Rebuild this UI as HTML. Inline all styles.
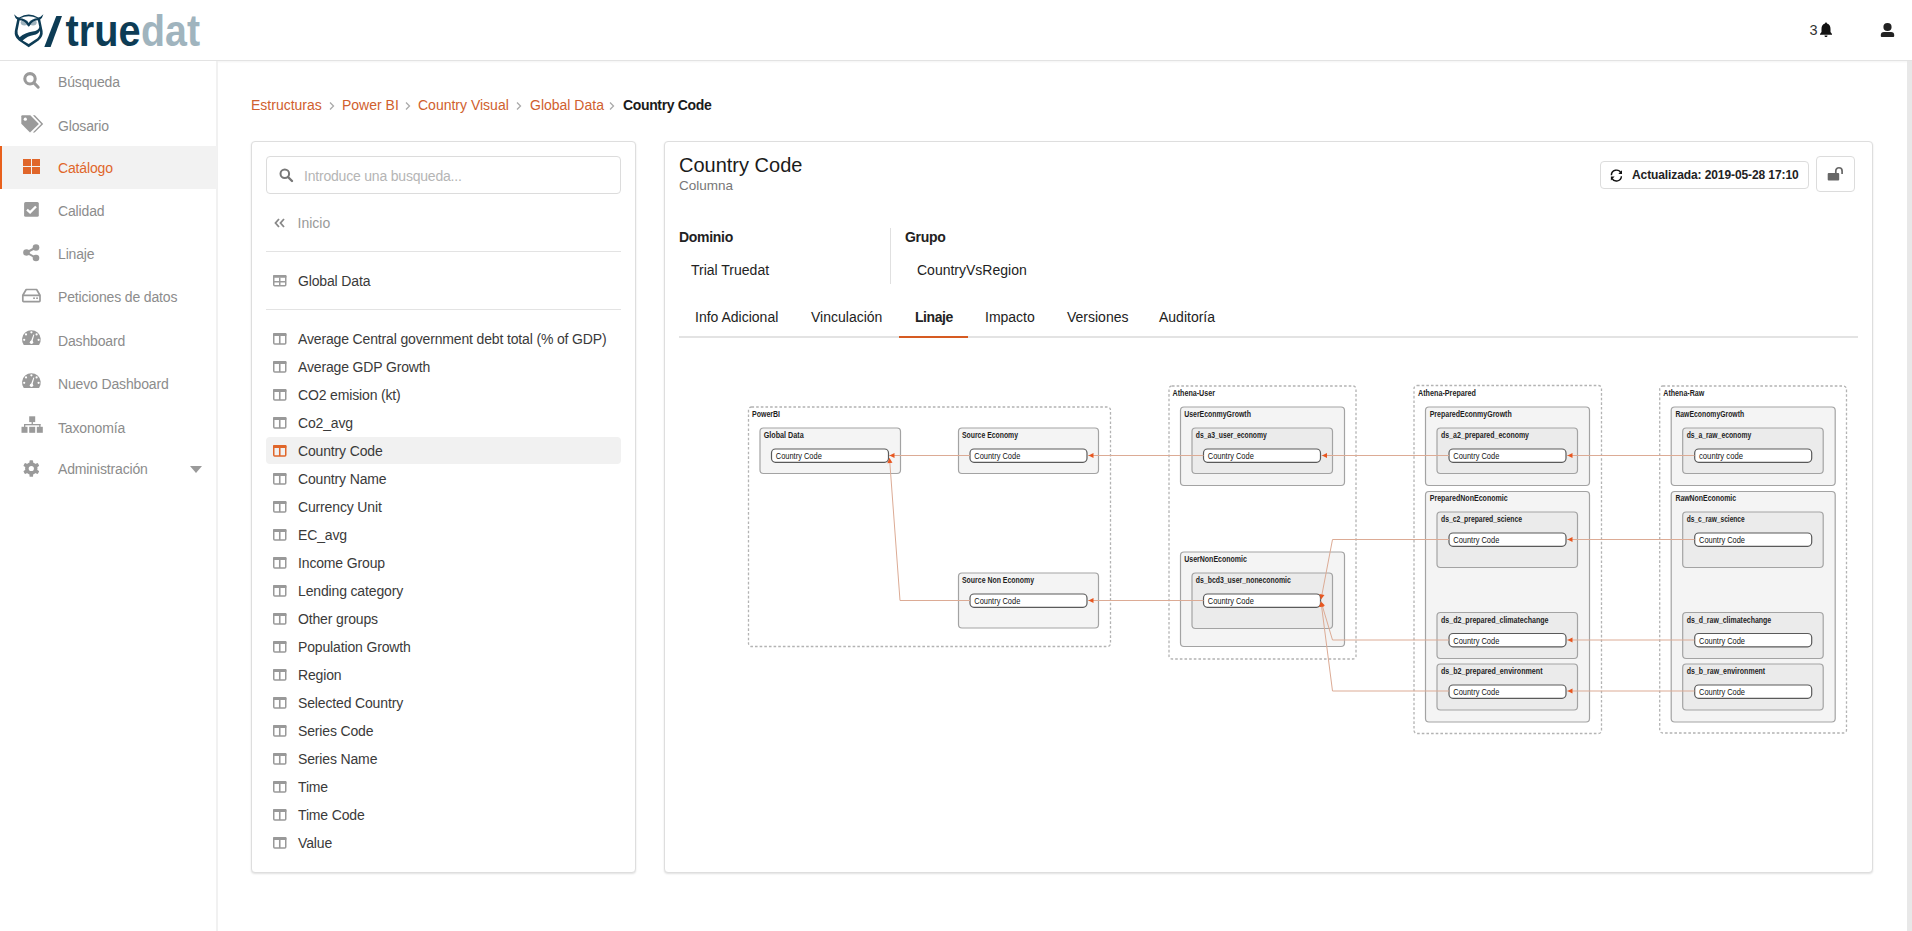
<!DOCTYPE html>
<html><head><meta charset="utf-8">
<style>
*{box-sizing:border-box;margin:0;padding:0}
html,body{width:1912px;height:931px;overflow:hidden;background:#fff;font-family:"Liberation Sans",sans-serif;color:#222}
#hdr{position:absolute;left:0;top:0;width:1912px;height:61px;background:#fff;border-bottom:1px solid #e3e3e3;box-shadow:0 1px 2px rgba(0,0,0,.05)}
#side{position:absolute;left:0;top:61px;width:218px;height:870px;background:#fff;border-right:2px solid #f1f1f1}
.nav{position:absolute;left:0;width:217px;height:43px}
.t{position:absolute;white-space:nowrap;line-height:1}
#sb{position:absolute;left:1907px;top:61px;width:5px;height:870px;background:#e8e8e8}
.card{position:absolute;background:#fff;border:1px solid #dedede;border-radius:4px;box-shadow:0 1px 2px rgba(0,0,0,.12)}
svg{position:absolute;overflow:visible}
</style></head><body>
<div id="hdr"></div>
<div id="side"></div>
<div id="sb"></div>

<svg style="left:0;top:0" width="220" height="60" viewBox="0 0 220 60">
<path fill="#0d3c55" d="M14,14.2 Q16.8,17.2 19.2,17.4 Q28.7,11.8 38.2,17.4 Q40.6,17.2 43.4,14.2 Q42.3,18.2 40.2,19.6 L42.6,31 Q43.4,36.6 38.6,40.6 L28.7,47.2 L18.8,40.6 Q14,36.6 14.8,31 L17.2,19.6 Q15.1,18.2 14,14.2 Z"/>
<path fill="#fff" d="M20,18.3 Q28.7,14 37.4,18.3 L39.3,27 Q38.6,30.8 32.6,31.6 Q25.2,32.6 19.6,37.2 Q17,34.6 17.5,31 Z"/>
<path fill="#fff" d="M22.6,40.6 Q27.6,36 33.8,35.1 Q38.4,34.3 40,30.6 Q40.6,35.2 37.4,38.2 L28.7,43.9 Z"/>
<g fill="#a0b4be"><ellipse cx="24.4" cy="22.6" rx="3.7" ry="2.9"/><ellipse cx="33" cy="22.6" rx="3.7" ry="2.9"/></g>
<path fill="none" stroke="#0d3c55" stroke-width="2.3" stroke-linejoin="round" d="M19,19.2 Q25.3,19.2 28.7,25.2 Q32.1,19.2 38.4,19.2"/>
<path fill="#0d3c55" d="M56.3,16 L62,16 L50.6,47 L44.3,47 Z"/>
<text x="65.5" y="46" font-family="Liberation Sans" font-weight="bold" font-size="45" fill="#0d3c55" textLength="75" lengthAdjust="spacingAndGlyphs">true</text>
<text x="141" y="46" font-family="Liberation Sans" font-weight="bold" font-size="45" fill="#a0b4be" textLength="59" lengthAdjust="spacingAndGlyphs">dat</text>
</svg>
<div class="t" style="left:1809.5px;top:23px;font-size:14.5px;color:#333;font-weight:normal;letter-spacing:0px;">3</div>
<svg style="left:1819px;top:21.8px" width="14" height="16" viewBox="0 0 14 16"><path fill="#111" d="M7 0.5 C7.6 0.5 8 1 8 1.6 C10.5 2.2 11.5 4.5 11.5 7 L11.5 10 L13 12 L13 12.8 L1 12.8 L1 12 L2.5 10 L2.5 7 C2.5 4.5 3.5 2.2 6 1.6 C6 1 6.4 0.5 7 0.5 Z M5.5 13.5 L8.5 13.5 C8.5 14.5 7.8 15 7 15 C6.2 15 5.5 14.5 5.5 13.5 Z"/></svg>
<svg style="left:1880px;top:23px" width="15" height="15" viewBox="0 0 15 15"><circle cx="7.5" cy="4" r="4.1" fill="#222"/><path fill="#222" d="M0.8 12 Q0.8 9 4 9 L11 9 Q14.2 9 14.2 12 L14.2 13 Q14.2 13.9 13.3 13.9 L1.7 13.9 Q0.8 13.9 0.8 13 Z"/></svg>
<div style="position:absolute;left:0;top:146px;width:217px;height:43px;background:#f2f2f2"></div>
<div style="position:absolute;left:0;top:146px;width:2px;height:43px;background:#e8601c"></div>
<div class="t" style="left:58px;top:75px;font-size:14px;color:#8c8c8c;font-weight:normal;letter-spacing:-0.15px;">Búsqueda</div>
<div class="t" style="left:58px;top:119px;font-size:14px;color:#8c8c8c;font-weight:normal;letter-spacing:-0.15px;">Glosario</div>
<div class="t" style="left:58px;top:161px;font-size:14px;color:#e0662a;font-weight:normal;letter-spacing:-0.15px;">Catálogo</div>
<div class="t" style="left:58px;top:204px;font-size:14px;color:#8c8c8c;font-weight:normal;letter-spacing:-0.15px;">Calidad</div>
<div class="t" style="left:58px;top:247px;font-size:14px;color:#8c8c8c;font-weight:normal;letter-spacing:-0.15px;">Linaje</div>
<div class="t" style="left:58px;top:290px;font-size:14px;color:#8c8c8c;font-weight:normal;letter-spacing:-0.15px;">Peticiones de datos</div>
<div class="t" style="left:58px;top:334px;font-size:14px;color:#8c8c8c;font-weight:normal;letter-spacing:-0.15px;">Dashboard</div>
<div class="t" style="left:58px;top:377px;font-size:14px;color:#8c8c8c;font-weight:normal;letter-spacing:-0.15px;">Nuevo Dashboard</div>
<div class="t" style="left:58px;top:421px;font-size:14px;color:#8c8c8c;font-weight:normal;letter-spacing:-0.15px;">Taxonomía</div>
<div class="t" style="left:58px;top:462px;font-size:14px;color:#8c8c8c;font-weight:normal;letter-spacing:-0.15px;">Administración</div>
<svg style="left:23px;top:72px" width="18" height="18" viewBox="0 0 18 18"><circle cx="7" cy="6.8" r="5.2" fill="none" stroke="#9a9a9a" stroke-width="3.1"/><path d="M11,10.9 L15.2,15.2" stroke="#9a9a9a" stroke-width="3" stroke-linecap="round"/></svg>
<svg style="left:21px;top:114.5px" width="23" height="18" viewBox="0 0 23 18"><path fill="#9a9a9a" d="M0.3,1.3 Q0.3,0.3 1.3,0.3 L9.3,0.3 L17.9,8.9 L9,17.5 L0.3,8.8 Z"/><circle cx="4.3" cy="4.2" r="1.6" fill="#fff"/><path fill="#9a9a9a" d="M11.9,0.3 L13.9,0.3 L22.2,8.9 L13.6,17.5 L11.8,17.5 L20.2,8.9 Z"/></svg>
<svg style="left:23px;top:159px" width="18" height="18" viewBox="0 0 18 18"><g fill="#e0662a"><rect x="0" y="0" width="8" height="7"/><rect x="9" y="0" width="8" height="7"/><rect x="0" y="8" width="8" height="7"/><rect x="9" y="8" width="8" height="7"/></g></svg>
<svg style="left:24px;top:202px" width="16" height="16" viewBox="0 0 16 16"><rect x="0.1" y="0.1" width="14.7" height="14.7" rx="1.5" fill="#9a9a9a"/><path d="M3,7.6 L6.1,10.4 L12,4.5" fill="none" stroke="#fff" stroke-width="2.3"/></svg>
<svg style="left:23px;top:244px" width="18" height="18" viewBox="0 0 18 18"><g fill="#9a9a9a"><circle cx="3.5" cy="8.5" r="3.3"/><circle cx="13" cy="3.5" r="3.3"/><circle cx="13" cy="14" r="3.3"/></g><path d="M3.5 8.5 L13 3.5 M3.5 8.5 L13 14" stroke="#9a9a9a" stroke-width="2"/></svg>
<svg style="left:21px;top:288px" width="21" height="15" viewBox="0 0 21 15"><path fill="none" stroke="#9a9a9a" stroke-width="1.7" stroke-linejoin="round" d="M1.8,7.3 L5.2,1.5 L15.6,1.5 L19,7.3 L19,12.8 Q19,13.6 18.2,13.6 L2.6,13.6 Q1.8,13.6 1.8,12.8 Z M1.8,7.3 L19,7.3"/><rect x="12.2" y="9.4" width="1.7" height="1.6" fill="#9a9a9a"/><rect x="15.2" y="9.4" width="1.7" height="1.6" fill="#9a9a9a"/></svg>
<svg style="left:21px;top:329px" width="21" height="17" viewBox="0 0 21 17"><path fill="#9a9a9a" d="M2.77,15.9 A9.35,9.35 0 1 1 18.03,15.9 Z"/><g fill="#fff"><circle cx="3.2" cy="10.8" r="1.1"/><circle cx="5" cy="5.4" r="1.1"/><circle cx="10.4" cy="3.3" r="1.1"/><circle cx="15.6" cy="5.4" r="1.1"/><circle cx="17.6" cy="10.8" r="1.1"/><path d="M9.7,13 L12.4,5.5 L13.3,5.8 L11.2,13.5 Z"/><circle cx="10.5" cy="13.3" r="1.7"/></g></svg>
<svg style="left:21px;top:372px" width="21" height="17" viewBox="0 0 21 17"><path fill="#9a9a9a" d="M2.77,15.9 A9.35,9.35 0 1 1 18.03,15.9 Z"/><g fill="#fff"><circle cx="3.2" cy="10.8" r="1.1"/><circle cx="5" cy="5.4" r="1.1"/><circle cx="10.4" cy="3.3" r="1.1"/><circle cx="15.6" cy="5.4" r="1.1"/><circle cx="17.6" cy="10.8" r="1.1"/><path d="M9.7,13 L12.4,5.5 L13.3,5.8 L11.2,13.5 Z"/><circle cx="10.5" cy="13.3" r="1.7"/></g></svg>
<svg style="left:21px;top:416px" width="23" height="18" viewBox="0 0 23 18"><g fill="#9a9a9a"><rect x="8.2" y="0.3" width="6" height="5.8"/><rect x="10.6" y="5.5" width="1.3" height="3"/><rect x="3" y="8" width="16.5" height="1.3"/><rect x="3" y="8" width="1.3" height="3"/><rect x="18.2" y="8" width="1.3" height="3"/><rect x="0.5" y="10.8" width="6" height="6"/><rect x="8.2" y="10.8" width="6" height="6"/><rect x="15.8" y="10.8" width="6" height="6"/></g></svg>
<svg style="left:22px;top:459px" width="19" height="19" viewBox="0 0 19 19"><g fill="#9a9a9a"><circle cx="9.3" cy="9.5" r="6.2"/><rect x="7.5" y="1.2" width="3.6" height="4" rx="0.9" transform="rotate(0 9.3 9.5)"/><rect x="7.5" y="1.2" width="3.6" height="4" rx="0.9" transform="rotate(60 9.3 9.5)"/><rect x="7.5" y="1.2" width="3.6" height="4" rx="0.9" transform="rotate(120 9.3 9.5)"/><rect x="7.5" y="1.2" width="3.6" height="4" rx="0.9" transform="rotate(180 9.3 9.5)"/><rect x="7.5" y="1.2" width="3.6" height="4" rx="0.9" transform="rotate(240 9.3 9.5)"/><rect x="7.5" y="1.2" width="3.6" height="4" rx="0.9" transform="rotate(300 9.3 9.5)"/></g><circle cx="9.3" cy="9.5" r="2.6" fill="#fff"/></svg>
<svg style="left:190px;top:465.5px" width="12" height="7" viewBox="0 0 12 7"><path d="M0 0 L12 0 L6 7 Z" fill="#9a9a9a"/></svg>
<div class="t" style="left:251px;top:98px;font-size:14px;color:#d0602e;font-weight:normal;letter-spacing:0px;">Estructuras</div>
<div class="t" style="left:342px;top:98px;font-size:14px;color:#d0602e;font-weight:normal;letter-spacing:0px;">Power BI</div>
<div class="t" style="left:418px;top:98px;font-size:14px;color:#d0602e;font-weight:normal;letter-spacing:0px;">Country Visual</div>
<div class="t" style="left:530px;top:98px;font-size:14px;color:#d0602e;font-weight:normal;letter-spacing:0px;">Global Data</div>
<svg style="left:329px;top:102px" width="6" height="8" viewBox="0 0 6 8"><path d="M1 0.5 L4.5 4 L1 7.5" fill="none" stroke="#aaa" stroke-width="1.3"/></svg>
<svg style="left:405px;top:102px" width="6" height="8" viewBox="0 0 6 8"><path d="M1 0.5 L4.5 4 L1 7.5" fill="none" stroke="#aaa" stroke-width="1.3"/></svg>
<svg style="left:516px;top:102px" width="6" height="8" viewBox="0 0 6 8"><path d="M1 0.5 L4.5 4 L1 7.5" fill="none" stroke="#aaa" stroke-width="1.3"/></svg>
<svg style="left:609px;top:102px" width="6" height="8" viewBox="0 0 6 8"><path d="M1 0.5 L4.5 4 L1 7.5" fill="none" stroke="#aaa" stroke-width="1.3"/></svg>
<div class="t" style="left:623px;top:98px;font-size:14px;color:#1b1b1b;font-weight:bold;letter-spacing:-0.35px;">Country Code</div>
<div class="card" style="left:251px;top:141px;width:385px;height:732px"></div>
<div style="position:absolute;left:266px;top:156px;width:355px;height:38px;border:1px solid #dcdcdc;border-radius:4px;background:#fff"></div>
<svg style="left:279px;top:168px" width="14" height="14" viewBox="0 0 14 14"><circle cx="5.8" cy="5.8" r="4.3" fill="none" stroke="#777" stroke-width="2"/><path d="M9 9 L13 13" stroke="#777" stroke-width="2.4" stroke-linecap="round"/></svg>
<div class="t" style="left:304px;top:169px;font-size:14px;color:#b5b5b5;font-weight:normal;letter-spacing:-0.2px;">Introduce una busqueda...</div>
<svg style="left:274px;top:218px" width="12" height="10" viewBox="0 0 12 10"><path d="M5 1 L1.5 5 L5 9 M10 1 L6.5 5 L10 9" fill="none" stroke="#888" stroke-width="1.8"/></svg>
<div class="t" style="left:297.5px;top:215.5px;font-size:14px;color:#999;font-weight:normal;letter-spacing:0px;">Inicio</div>
<div style="position:absolute;left:266px;top:251px;width:355px;height:1px;background:#e3e3e3"></div>
<svg style="left:273px;top:275px" width="14" height="12" viewBox="0 0 14 12"><rect x="0.75" y="0.75" width="12" height="10.1" rx="1" fill="none" stroke="#9b9b9b" stroke-width="1.5"/><rect x="0" y="0" width="13.5" height="2.8" rx="1" fill="#9b9b9b"/><path d="M0.75 6.8 L12.75 6.8 M6.75 2.5 L6.75 10.8" stroke="#9b9b9b" stroke-width="1.5"/></svg>
<div class="t" style="left:298px;top:274px;font-size:14px;color:#3a3a3a;font-weight:normal;letter-spacing:-0.15px;">Global Data</div>
<div style="position:absolute;left:266px;top:309px;width:355px;height:1px;background:#e3e3e3"></div>
<svg style="left:273px;top:333px" width="14" height="12" viewBox="0 0 14 12"><rect x="0.75" y="0.75" width="12" height="10.3" rx="1" fill="none" stroke="#999" stroke-width="1.5"/><rect x="0" y="0" width="13.5" height="3" rx="1" fill="#999"/><path d="M6.75 2.5 L6.75 11" stroke="#999" stroke-width="1.6"/></svg>
<div class="t" style="left:298px;top:332px;font-size:14px;color:#3a3a3a;font-weight:normal;letter-spacing:-0.15px;">Average Central government debt total (% of GDP)</div>
<svg style="left:273px;top:361px" width="14" height="12" viewBox="0 0 14 12"><rect x="0.75" y="0.75" width="12" height="10.3" rx="1" fill="none" stroke="#999" stroke-width="1.5"/><rect x="0" y="0" width="13.5" height="3" rx="1" fill="#999"/><path d="M6.75 2.5 L6.75 11" stroke="#999" stroke-width="1.6"/></svg>
<div class="t" style="left:298px;top:360px;font-size:14px;color:#3a3a3a;font-weight:normal;letter-spacing:-0.15px;">Average GDP Growth</div>
<svg style="left:273px;top:389px" width="14" height="12" viewBox="0 0 14 12"><rect x="0.75" y="0.75" width="12" height="10.3" rx="1" fill="none" stroke="#999" stroke-width="1.5"/><rect x="0" y="0" width="13.5" height="3" rx="1" fill="#999"/><path d="M6.75 2.5 L6.75 11" stroke="#999" stroke-width="1.6"/></svg>
<div class="t" style="left:298px;top:388px;font-size:14px;color:#3a3a3a;font-weight:normal;letter-spacing:-0.15px;">CO2 emision (kt)</div>
<svg style="left:273px;top:417px" width="14" height="12" viewBox="0 0 14 12"><rect x="0.75" y="0.75" width="12" height="10.3" rx="1" fill="none" stroke="#999" stroke-width="1.5"/><rect x="0" y="0" width="13.5" height="3" rx="1" fill="#999"/><path d="M6.75 2.5 L6.75 11" stroke="#999" stroke-width="1.6"/></svg>
<div class="t" style="left:298px;top:416px;font-size:14px;color:#3a3a3a;font-weight:normal;letter-spacing:-0.15px;">Co2_avg</div>
<div style="position:absolute;left:266px;top:437px;width:355px;height:27px;border-radius:4px;background:#f1f1f1"></div>
<svg style="left:273px;top:445px" width="14" height="12" viewBox="0 0 14 12"><rect x="0.75" y="0.75" width="12" height="10.3" rx="1" fill="none" stroke="#e0662a" stroke-width="1.5"/><rect x="0" y="0" width="13.5" height="3" rx="1" fill="#e0662a"/><path d="M6.75 2.5 L6.75 11" stroke="#e0662a" stroke-width="1.6"/></svg>
<div class="t" style="left:298px;top:444px;font-size:14px;color:#3a3a3a;font-weight:normal;letter-spacing:-0.15px;">Country Code</div>
<svg style="left:273px;top:473px" width="14" height="12" viewBox="0 0 14 12"><rect x="0.75" y="0.75" width="12" height="10.3" rx="1" fill="none" stroke="#999" stroke-width="1.5"/><rect x="0" y="0" width="13.5" height="3" rx="1" fill="#999"/><path d="M6.75 2.5 L6.75 11" stroke="#999" stroke-width="1.6"/></svg>
<div class="t" style="left:298px;top:472px;font-size:14px;color:#3a3a3a;font-weight:normal;letter-spacing:-0.15px;">Country Name</div>
<svg style="left:273px;top:501px" width="14" height="12" viewBox="0 0 14 12"><rect x="0.75" y="0.75" width="12" height="10.3" rx="1" fill="none" stroke="#999" stroke-width="1.5"/><rect x="0" y="0" width="13.5" height="3" rx="1" fill="#999"/><path d="M6.75 2.5 L6.75 11" stroke="#999" stroke-width="1.6"/></svg>
<div class="t" style="left:298px;top:500px;font-size:14px;color:#3a3a3a;font-weight:normal;letter-spacing:-0.15px;">Currency Unit</div>
<svg style="left:273px;top:529px" width="14" height="12" viewBox="0 0 14 12"><rect x="0.75" y="0.75" width="12" height="10.3" rx="1" fill="none" stroke="#999" stroke-width="1.5"/><rect x="0" y="0" width="13.5" height="3" rx="1" fill="#999"/><path d="M6.75 2.5 L6.75 11" stroke="#999" stroke-width="1.6"/></svg>
<div class="t" style="left:298px;top:528px;font-size:14px;color:#3a3a3a;font-weight:normal;letter-spacing:-0.15px;">EC_avg</div>
<svg style="left:273px;top:557px" width="14" height="12" viewBox="0 0 14 12"><rect x="0.75" y="0.75" width="12" height="10.3" rx="1" fill="none" stroke="#999" stroke-width="1.5"/><rect x="0" y="0" width="13.5" height="3" rx="1" fill="#999"/><path d="M6.75 2.5 L6.75 11" stroke="#999" stroke-width="1.6"/></svg>
<div class="t" style="left:298px;top:556px;font-size:14px;color:#3a3a3a;font-weight:normal;letter-spacing:-0.15px;">Income Group</div>
<svg style="left:273px;top:585px" width="14" height="12" viewBox="0 0 14 12"><rect x="0.75" y="0.75" width="12" height="10.3" rx="1" fill="none" stroke="#999" stroke-width="1.5"/><rect x="0" y="0" width="13.5" height="3" rx="1" fill="#999"/><path d="M6.75 2.5 L6.75 11" stroke="#999" stroke-width="1.6"/></svg>
<div class="t" style="left:298px;top:584px;font-size:14px;color:#3a3a3a;font-weight:normal;letter-spacing:-0.15px;">Lending category</div>
<svg style="left:273px;top:613px" width="14" height="12" viewBox="0 0 14 12"><rect x="0.75" y="0.75" width="12" height="10.3" rx="1" fill="none" stroke="#999" stroke-width="1.5"/><rect x="0" y="0" width="13.5" height="3" rx="1" fill="#999"/><path d="M6.75 2.5 L6.75 11" stroke="#999" stroke-width="1.6"/></svg>
<div class="t" style="left:298px;top:612px;font-size:14px;color:#3a3a3a;font-weight:normal;letter-spacing:-0.15px;">Other groups</div>
<svg style="left:273px;top:641px" width="14" height="12" viewBox="0 0 14 12"><rect x="0.75" y="0.75" width="12" height="10.3" rx="1" fill="none" stroke="#999" stroke-width="1.5"/><rect x="0" y="0" width="13.5" height="3" rx="1" fill="#999"/><path d="M6.75 2.5 L6.75 11" stroke="#999" stroke-width="1.6"/></svg>
<div class="t" style="left:298px;top:640px;font-size:14px;color:#3a3a3a;font-weight:normal;letter-spacing:-0.15px;">Population Growth</div>
<svg style="left:273px;top:669px" width="14" height="12" viewBox="0 0 14 12"><rect x="0.75" y="0.75" width="12" height="10.3" rx="1" fill="none" stroke="#999" stroke-width="1.5"/><rect x="0" y="0" width="13.5" height="3" rx="1" fill="#999"/><path d="M6.75 2.5 L6.75 11" stroke="#999" stroke-width="1.6"/></svg>
<div class="t" style="left:298px;top:668px;font-size:14px;color:#3a3a3a;font-weight:normal;letter-spacing:-0.15px;">Region</div>
<svg style="left:273px;top:697px" width="14" height="12" viewBox="0 0 14 12"><rect x="0.75" y="0.75" width="12" height="10.3" rx="1" fill="none" stroke="#999" stroke-width="1.5"/><rect x="0" y="0" width="13.5" height="3" rx="1" fill="#999"/><path d="M6.75 2.5 L6.75 11" stroke="#999" stroke-width="1.6"/></svg>
<div class="t" style="left:298px;top:696px;font-size:14px;color:#3a3a3a;font-weight:normal;letter-spacing:-0.15px;">Selected Country</div>
<svg style="left:273px;top:725px" width="14" height="12" viewBox="0 0 14 12"><rect x="0.75" y="0.75" width="12" height="10.3" rx="1" fill="none" stroke="#999" stroke-width="1.5"/><rect x="0" y="0" width="13.5" height="3" rx="1" fill="#999"/><path d="M6.75 2.5 L6.75 11" stroke="#999" stroke-width="1.6"/></svg>
<div class="t" style="left:298px;top:724px;font-size:14px;color:#3a3a3a;font-weight:normal;letter-spacing:-0.15px;">Series Code</div>
<svg style="left:273px;top:753px" width="14" height="12" viewBox="0 0 14 12"><rect x="0.75" y="0.75" width="12" height="10.3" rx="1" fill="none" stroke="#999" stroke-width="1.5"/><rect x="0" y="0" width="13.5" height="3" rx="1" fill="#999"/><path d="M6.75 2.5 L6.75 11" stroke="#999" stroke-width="1.6"/></svg>
<div class="t" style="left:298px;top:752px;font-size:14px;color:#3a3a3a;font-weight:normal;letter-spacing:-0.15px;">Series Name</div>
<svg style="left:273px;top:781px" width="14" height="12" viewBox="0 0 14 12"><rect x="0.75" y="0.75" width="12" height="10.3" rx="1" fill="none" stroke="#999" stroke-width="1.5"/><rect x="0" y="0" width="13.5" height="3" rx="1" fill="#999"/><path d="M6.75 2.5 L6.75 11" stroke="#999" stroke-width="1.6"/></svg>
<div class="t" style="left:298px;top:780px;font-size:14px;color:#3a3a3a;font-weight:normal;letter-spacing:-0.15px;">Time</div>
<svg style="left:273px;top:809px" width="14" height="12" viewBox="0 0 14 12"><rect x="0.75" y="0.75" width="12" height="10.3" rx="1" fill="none" stroke="#999" stroke-width="1.5"/><rect x="0" y="0" width="13.5" height="3" rx="1" fill="#999"/><path d="M6.75 2.5 L6.75 11" stroke="#999" stroke-width="1.6"/></svg>
<div class="t" style="left:298px;top:808px;font-size:14px;color:#3a3a3a;font-weight:normal;letter-spacing:-0.15px;">Time Code</div>
<svg style="left:273px;top:837px" width="14" height="12" viewBox="0 0 14 12"><rect x="0.75" y="0.75" width="12" height="10.3" rx="1" fill="none" stroke="#999" stroke-width="1.5"/><rect x="0" y="0" width="13.5" height="3" rx="1" fill="#999"/><path d="M6.75 2.5 L6.75 11" stroke="#999" stroke-width="1.6"/></svg>
<div class="t" style="left:298px;top:836px;font-size:14px;color:#3a3a3a;font-weight:normal;letter-spacing:-0.15px;">Value</div>
<div class="card" style="left:664px;top:141px;width:1209px;height:732px"></div>
<div class="t" style="left:679px;top:155px;font-size:20px;color:#1b1b1b;font-weight:normal;letter-spacing:0px;">Country Code</div>
<div class="t" style="left:679px;top:179px;font-size:13.5px;color:#777;font-weight:normal;letter-spacing:0px;">Columna</div>
<div style="position:absolute;left:1600px;top:161px;width:209px;height:28px;border:1px solid #dcdcdc;border-radius:4px;background:#fff"></div>
<svg style="left:1610px;top:168.7px" width="13" height="13" viewBox="0 0 13 13"><path d="M1.4,6.2 A5,5 0 0 1 10.9,4" fill="none" stroke="#111" stroke-width="1.45"/><path d="M12,1.2 L12,5 L8.3,5 Z" fill="#111"/><path d="M11.4,7.3 A5,5 0 0 1 2.1,9.6" fill="none" stroke="#111" stroke-width="1.45"/><path d="M0.9,7.6 L0.9,11.4 L4.6,7.6 Z" fill="#111"/></svg>
<div class="t" style="left:1632px;top:169px;font-size:12px;color:#222;font-weight:bold;letter-spacing:-0.1px;">Actualizada: 2019-05-28 17:10</div>
<div style="position:absolute;left:1816px;top:156px;width:39px;height:36px;border:1px solid #dcdcdc;border-radius:4px;background:#fff"></div>
<svg style="left:1827px;top:167px" width="17" height="15" viewBox="0 0 17 15"><rect x="0.7" y="6" width="11.5" height="7.6" rx="1" fill="#676767"/><path d="M8.8,6.2 L8.8,3.9 A3.15,3.15 0 0 1 15.1,3.9 L15.1,6.9" fill="none" stroke="#676767" stroke-width="1.7"/></svg>
<div class="t" style="left:679px;top:230px;font-size:14px;color:#222;font-weight:bold;letter-spacing:-0.3px;">Dominio</div>
<div class="t" style="left:905px;top:230px;font-size:14px;color:#222;font-weight:bold;letter-spacing:-0.3px;">Grupo</div>
<div class="t" style="left:691px;top:263px;font-size:14px;color:#222;font-weight:normal;letter-spacing:0px;">Trial Truedat</div>
<div class="t" style="left:917px;top:263px;font-size:14px;color:#222;font-weight:normal;letter-spacing:0px;">CountryVsRegion</div>
<div style="position:absolute;left:890px;top:228px;width:1px;height:56px;background:#e0e0e0"></div>
<div class="t" style="left:695px;top:310px;font-size:14px;color:#222;font-weight:normal;letter-spacing:0px;">Info Adicional</div>
<div class="t" style="left:811px;top:310px;font-size:14px;color:#222;font-weight:normal;letter-spacing:0px;">Vinculación</div>
<div class="t" style="left:915px;top:310px;font-size:14px;color:#222;font-weight:bold;letter-spacing:-0.45px;">Linaje</div>
<div class="t" style="left:985px;top:310px;font-size:14px;color:#222;font-weight:normal;letter-spacing:0px;">Impacto</div>
<div class="t" style="left:1067px;top:310px;font-size:14px;color:#222;font-weight:normal;letter-spacing:0px;">Versiones</div>
<div class="t" style="left:1159px;top:310px;font-size:14px;color:#222;font-weight:normal;letter-spacing:0px;">Auditoría</div>
<div style="position:absolute;left:679px;top:336px;width:1179px;height:2px;background:#e3e3e3"></div>
<div style="position:absolute;left:899px;top:336px;width:69px;height:2px;background:#d65b22"></div>
<svg style="left:0;top:0" width="1912" height="931" viewBox="0 0 1912 931">
<rect x="748.5" y="407" width="362.0" height="239.5" rx="3" fill="none" stroke="#b3b3b3" stroke-width="1.3" stroke-dasharray="2.6 2.05"/>
<text x="752" y="417" font-family="Liberation Sans" font-size="9" font-weight="bold" fill="#1e1e1e" textLength="28" lengthAdjust="spacingAndGlyphs">PowerBI</text>
<rect x="1169" y="386" width="187" height="273" rx="3" fill="none" stroke="#b3b3b3" stroke-width="1.3" stroke-dasharray="2.6 2.05"/>
<text x="1172.5" y="396" font-family="Liberation Sans" font-size="9" font-weight="bold" fill="#1e1e1e" textLength="42.5" lengthAdjust="spacingAndGlyphs">Athena-User</text>
<rect x="1414" y="385.5" width="187.5" height="348.0" rx="3" fill="none" stroke="#b3b3b3" stroke-width="1.3" stroke-dasharray="2.6 2.05"/>
<text x="1418" y="396" font-family="Liberation Sans" font-size="9" font-weight="bold" fill="#1e1e1e" textLength="58" lengthAdjust="spacingAndGlyphs">Athena-Prepared</text>
<rect x="1659.7" y="386" width="186.79999999999995" height="347" rx="3" fill="none" stroke="#b3b3b3" stroke-width="1.3" stroke-dasharray="2.6 2.05"/>
<text x="1663.3" y="396" font-family="Liberation Sans" font-size="9" font-weight="bold" fill="#1e1e1e" textLength="41" lengthAdjust="spacingAndGlyphs">Athena-Raw</text>
<rect x="760" y="428" width="140.5" height="45.5" rx="3.5" fill="#f4f4f4" stroke="#a3a3a3" stroke-width="1.2"/>
<text x="763.7" y="437.7" font-family="Liberation Sans" font-size="9" font-weight="bold" fill="#1e1e1e" textLength="40" lengthAdjust="spacingAndGlyphs">Global Data</text>
<rect x="771.5" y="449" width="117" height="13.3" rx="4" fill="#fff" stroke="#5a5a5a" stroke-width="1.2"/>
<text x="775.8" y="459" font-family="Liberation Sans" font-size="8.8" fill="#111" textLength="46" lengthAdjust="spacingAndGlyphs">Country Code</text>
<rect x="958.5" y="428" width="140.0" height="45.5" rx="3.5" fill="#f4f4f4" stroke="#a3a3a3" stroke-width="1.2"/>
<text x="962" y="437.7" font-family="Liberation Sans" font-size="9" font-weight="bold" fill="#1e1e1e" textLength="56" lengthAdjust="spacingAndGlyphs">Source Economy</text>
<rect x="970" y="449" width="117" height="13.3" rx="4" fill="#fff" stroke="#5a5a5a" stroke-width="1.2"/>
<text x="974.3" y="459" font-family="Liberation Sans" font-size="8.8" fill="#111" textLength="46" lengthAdjust="spacingAndGlyphs">Country Code</text>
<rect x="958.5" y="573" width="140.0" height="55" rx="3.5" fill="#f4f4f4" stroke="#a3a3a3" stroke-width="1.2"/>
<text x="962" y="582.7" font-family="Liberation Sans" font-size="9" font-weight="bold" fill="#1e1e1e" textLength="72" lengthAdjust="spacingAndGlyphs">Source Non Economy</text>
<rect x="970" y="594" width="117" height="13.3" rx="4" fill="#fff" stroke="#5a5a5a" stroke-width="1.2"/>
<text x="974.3" y="604" font-family="Liberation Sans" font-size="8.8" fill="#111" textLength="46" lengthAdjust="spacingAndGlyphs">Country Code</text>
<rect x="1180.5" y="407" width="164.0" height="78.5" rx="3.5" fill="#f4f4f4" stroke="#a3a3a3" stroke-width="1.2"/>
<text x="1184.2" y="416.8" font-family="Liberation Sans" font-size="9" font-weight="bold" fill="#1e1e1e" textLength="66.7" lengthAdjust="spacingAndGlyphs">UserEconmyGrowth</text>
<rect x="1192" y="428" width="140.5" height="45.5" rx="3.5" fill="#ebebeb" stroke="#a3a3a3" stroke-width="1.2"/>
<text x="1195.8" y="437.7" font-family="Liberation Sans" font-size="9" font-weight="bold" fill="#1e1e1e" textLength="71" lengthAdjust="spacingAndGlyphs">ds_a3_user_economy</text>
<rect x="1203.5" y="449" width="117" height="13.3" rx="4" fill="#fff" stroke="#5a5a5a" stroke-width="1.2"/>
<text x="1207.8" y="459" font-family="Liberation Sans" font-size="8.8" fill="#111" textLength="46" lengthAdjust="spacingAndGlyphs">Country Code</text>
<rect x="1180.5" y="552" width="164.0" height="94.5" rx="3.5" fill="#f4f4f4" stroke="#a3a3a3" stroke-width="1.2"/>
<text x="1184.2" y="561.8" font-family="Liberation Sans" font-size="9" font-weight="bold" fill="#1e1e1e" textLength="62.7" lengthAdjust="spacingAndGlyphs">UserNonEconomic</text>
<rect x="1192" y="573" width="140.5" height="55.5" rx="3.5" fill="#ebebeb" stroke="#a3a3a3" stroke-width="1.2"/>
<text x="1195.8" y="582.7" font-family="Liberation Sans" font-size="9" font-weight="bold" fill="#1e1e1e" textLength="95" lengthAdjust="spacingAndGlyphs">ds_bcd3_user_noneconomic</text>
<rect x="1203.5" y="594" width="117" height="13.3" rx="4" fill="#fff" stroke="#5a5a5a" stroke-width="1.2"/>
<text x="1207.8" y="604" font-family="Liberation Sans" font-size="8.8" fill="#111" textLength="46" lengthAdjust="spacingAndGlyphs">Country Code</text>
<rect x="1425.5" y="407" width="164.0" height="78.5" rx="3.5" fill="#f4f4f4" stroke="#a3a3a3" stroke-width="1.2"/>
<text x="1429.7" y="416.8" font-family="Liberation Sans" font-size="9" font-weight="bold" fill="#1e1e1e" textLength="82" lengthAdjust="spacingAndGlyphs">PreparedEconmyGrowth</text>
<rect x="1437.0" y="428" width="140.5" height="45.5" rx="3.5" fill="#ebebeb" stroke="#a3a3a3" stroke-width="1.2"/>
<text x="1441.0" y="437.7" font-family="Liberation Sans" font-size="9" font-weight="bold" fill="#1e1e1e" textLength="88" lengthAdjust="spacingAndGlyphs">ds_a2_prepared_economy</text>
<rect x="1449.0" y="449" width="117" height="13.3" rx="4" fill="#fff" stroke="#5a5a5a" stroke-width="1.2"/>
<text x="1453.3" y="459" font-family="Liberation Sans" font-size="8.8" fill="#111" textLength="46" lengthAdjust="spacingAndGlyphs">Country Code</text>
<rect x="1425.5" y="491.5" width="164.0" height="230.5" rx="3.5" fill="#f4f4f4" stroke="#a3a3a3" stroke-width="1.2"/>
<text x="1429.7" y="501.3" font-family="Liberation Sans" font-size="9" font-weight="bold" fill="#1e1e1e" textLength="78" lengthAdjust="spacingAndGlyphs">PreparedNonEconomic</text>
<rect x="1437.0" y="512" width="140.5" height="55.5" rx="3.5" fill="#ebebeb" stroke="#a3a3a3" stroke-width="1.2"/>
<text x="1441.0" y="521.7" font-family="Liberation Sans" font-size="9" font-weight="bold" fill="#1e1e1e" textLength="81" lengthAdjust="spacingAndGlyphs">ds_c2_prepared_science</text>
<rect x="1449.0" y="533" width="117" height="13.3" rx="4" fill="#fff" stroke="#5a5a5a" stroke-width="1.2"/>
<text x="1453.3" y="543" font-family="Liberation Sans" font-size="8.8" fill="#111" textLength="46" lengthAdjust="spacingAndGlyphs">Country Code</text>
<rect x="1437.0" y="612.5" width="140.5" height="46.0" rx="3.5" fill="#ebebeb" stroke="#a3a3a3" stroke-width="1.2"/>
<text x="1441.0" y="622.5" font-family="Liberation Sans" font-size="9" font-weight="bold" fill="#1e1e1e" textLength="107.5" lengthAdjust="spacingAndGlyphs">ds_d2_prepared_climatechange</text>
<rect x="1449.0" y="633.5" width="117" height="13.3" rx="4" fill="#fff" stroke="#5a5a5a" stroke-width="1.2"/>
<text x="1453.3" y="643.5" font-family="Liberation Sans" font-size="8.8" fill="#111" textLength="46" lengthAdjust="spacingAndGlyphs">Country Code</text>
<rect x="1437.0" y="664" width="140.5" height="46" rx="3.5" fill="#ebebeb" stroke="#a3a3a3" stroke-width="1.2"/>
<text x="1441.0" y="674" font-family="Liberation Sans" font-size="9" font-weight="bold" fill="#1e1e1e" textLength="101.5" lengthAdjust="spacingAndGlyphs">ds_b2_prepared_environment</text>
<rect x="1449.0" y="685" width="117" height="13.3" rx="4" fill="#fff" stroke="#5a5a5a" stroke-width="1.2"/>
<text x="1453.3" y="695" font-family="Liberation Sans" font-size="8.8" fill="#111" textLength="46" lengthAdjust="spacingAndGlyphs">Country Code</text>
<rect x="1671.2" y="407" width="164.0" height="78.5" rx="3.5" fill="#f4f4f4" stroke="#a3a3a3" stroke-width="1.2"/>
<text x="1675.4" y="416.8" font-family="Liberation Sans" font-size="9" font-weight="bold" fill="#1e1e1e" textLength="68.7" lengthAdjust="spacingAndGlyphs">RawEconomyGrowth</text>
<rect x="1682.7" y="428" width="140.5" height="45.5" rx="3.5" fill="#ebebeb" stroke="#a3a3a3" stroke-width="1.2"/>
<text x="1686.7" y="437.7" font-family="Liberation Sans" font-size="9" font-weight="bold" fill="#1e1e1e" textLength="64.5" lengthAdjust="spacingAndGlyphs">ds_a_raw_economy</text>
<rect x="1694.7" y="449" width="117" height="13.3" rx="4" fill="#fff" stroke="#5a5a5a" stroke-width="1.2"/>
<text x="1699.0" y="459" font-family="Liberation Sans" font-size="8.8" fill="#111" textLength="44" lengthAdjust="spacingAndGlyphs">country code</text>
<rect x="1671.2" y="491.5" width="164.0" height="230.5" rx="3.5" fill="#f4f4f4" stroke="#a3a3a3" stroke-width="1.2"/>
<text x="1675.4" y="501.3" font-family="Liberation Sans" font-size="9" font-weight="bold" fill="#1e1e1e" textLength="60.7" lengthAdjust="spacingAndGlyphs">RawNonEconomic</text>
<rect x="1682.7" y="512" width="140.5" height="55.5" rx="3.5" fill="#ebebeb" stroke="#a3a3a3" stroke-width="1.2"/>
<text x="1686.7" y="521.7" font-family="Liberation Sans" font-size="9" font-weight="bold" fill="#1e1e1e" textLength="58" lengthAdjust="spacingAndGlyphs">ds_c_raw_science</text>
<rect x="1694.7" y="533" width="117" height="13.3" rx="4" fill="#fff" stroke="#5a5a5a" stroke-width="1.2"/>
<text x="1699.0" y="543" font-family="Liberation Sans" font-size="8.8" fill="#111" textLength="46" lengthAdjust="spacingAndGlyphs">Country Code</text>
<rect x="1682.7" y="612.5" width="140.5" height="46.0" rx="3.5" fill="#ebebeb" stroke="#a3a3a3" stroke-width="1.2"/>
<text x="1686.7" y="622.5" font-family="Liberation Sans" font-size="9" font-weight="bold" fill="#1e1e1e" textLength="84.5" lengthAdjust="spacingAndGlyphs">ds_d_raw_climatechange</text>
<rect x="1694.7" y="633.5" width="117" height="13.3" rx="4" fill="#fff" stroke="#5a5a5a" stroke-width="1.2"/>
<text x="1699.0" y="643.5" font-family="Liberation Sans" font-size="8.8" fill="#111" textLength="46" lengthAdjust="spacingAndGlyphs">Country Code</text>
<rect x="1682.7" y="664" width="140.5" height="46" rx="3.5" fill="#ebebeb" stroke="#a3a3a3" stroke-width="1.2"/>
<text x="1686.7" y="674" font-family="Liberation Sans" font-size="9" font-weight="bold" fill="#1e1e1e" textLength="78.5" lengthAdjust="spacingAndGlyphs">ds_b_raw_environment</text>
<rect x="1694.7" y="685" width="117" height="13.3" rx="4" fill="#fff" stroke="#5a5a5a" stroke-width="1.2"/>
<text x="1699.0" y="695" font-family="Liberation Sans" font-size="8.8" fill="#111" textLength="46" lengthAdjust="spacingAndGlyphs">Country Code</text>
<polyline points="970,455.5 889,455.5" fill="none" stroke="#dcab95" stroke-width="1"/>
<path d="M889.50,455.50 L894.50,452.90 L894.50,458.10 Z" fill="#e8561f"/>
<polyline points="970,600.5 900,600.5 889.5,458" fill="none" stroke="#dcab95" stroke-width="1"/>
<path d="M889.50,458.00 L892.46,462.80 L887.27,463.18 Z" fill="#e8561f"/>
<polyline points="1203.5,455.5 1088,455.5" fill="none" stroke="#dcab95" stroke-width="1"/>
<path d="M1088.50,455.50 L1093.50,452.90 L1093.50,458.10 Z" fill="#e8561f"/>
<polyline points="1203.5,600.5 1088,600.5" fill="none" stroke="#dcab95" stroke-width="1"/>
<path d="M1088.50,600.50 L1093.50,597.90 L1093.50,603.10 Z" fill="#e8561f"/>
<polyline points="1449,455.5 1321.5,455.5" fill="none" stroke="#dcab95" stroke-width="1"/>
<path d="M1322.00,455.50 L1327.00,452.90 L1327.00,458.10 Z" fill="#e8561f"/>
<polyline points="1449,539.5 1332.5,539.5 1321,599.5" fill="none" stroke="#dcab95" stroke-width="1"/>
<path d="M1321.00,599.50 L1319.39,594.10 L1324.49,595.08 Z" fill="#e8561f"/>
<polyline points="1449,640 1332.5,640 1321,601.5" fill="none" stroke="#dcab95" stroke-width="1"/>
<path d="M1321.00,601.50 L1324.92,605.55 L1319.94,607.03 Z" fill="#e8561f"/>
<polyline points="1449,691 1332.5,691 1321,601.8" fill="none" stroke="#dcab95" stroke-width="1"/>
<path d="M1321.00,601.80 L1324.22,606.43 L1319.06,607.09 Z" fill="#e8561f"/>
<polyline points="1694.5,455.5 1567,455.5" fill="none" stroke="#dcab95" stroke-width="1"/>
<path d="M1567.50,455.50 L1572.50,452.90 L1572.50,458.10 Z" fill="#e8561f"/>
<polyline points="1694.5,539.5 1567,539.5" fill="none" stroke="#dcab95" stroke-width="1"/>
<path d="M1567.50,539.50 L1572.50,536.90 L1572.50,542.10 Z" fill="#e8561f"/>
<polyline points="1694.5,640 1567,640" fill="none" stroke="#dcab95" stroke-width="1"/>
<path d="M1567.50,640.00 L1572.50,637.40 L1572.50,642.60 Z" fill="#e8561f"/>
<polyline points="1694.5,691 1567,691" fill="none" stroke="#dcab95" stroke-width="1"/>
<path d="M1567.50,691.00 L1572.50,688.40 L1572.50,693.60 Z" fill="#e8561f"/>
</svg>
</body></html>
